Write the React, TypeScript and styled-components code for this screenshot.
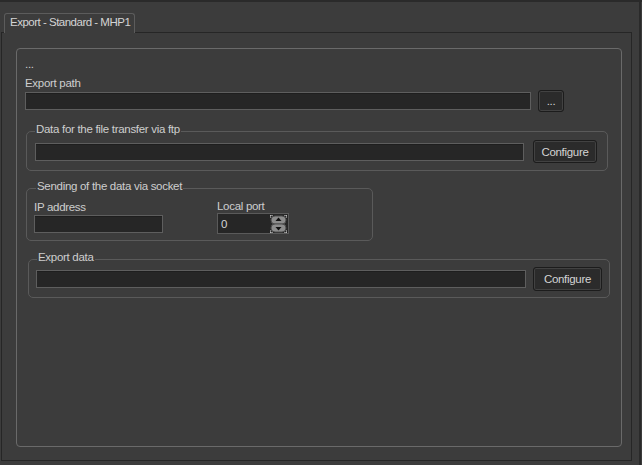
import styled, { createGlobalStyle } from "styled-components"

const Global = createGlobalStyle`
    html, body {
        margin: 0;
        padding: 0;
        background: #3c3c3c;
    }
    body {
        font-family: "Liberation Sans", Arial, sans-serif;
        font-size: 11.5px;
        letter-spacing: -0.3px;
        color: #cecece;
    }
`
const Page = styled.div`
    width: 642px;
    height: 465px;
    box-sizing: border-box;
    border-top: 2px solid #2a2a2a;
    padding: 11px 0 0 1px;
    display: flex;
    flex-direction: column;
    background: #3c3c3c;
    box-shadow: inset -1px 0 0 #3c3c3c, inset -3px 0 0 #2a2a2a;
`
const TabBar = styled.div`
    display: flex;
    padding-left: 3px;
    margin-bottom: -1px;
    position: relative;
    z-index: 1;
`
const Tab = styled.div`
    height: 20px;
    box-sizing: border-box;
    padding: 2px 4px 0 5px;
    border: 1px solid #5c5c5c;
    border-bottom: none;
    border-radius: 3px 3px 0 0;
    background: #3c3c3c;
    line-height: 13px;
    letter-spacing: -0.5px;
    color: #d4d4d4;
    white-space: nowrap;
`
const Pane = styled.div`
    width: 631px;
    height: 429px;
    box-sizing: border-box;
    border: 1px solid #262626;
    padding: 15px 9px 13px 14px;
    display: flex;
    flex-direction: column;
`
const MainGroup = styled.div`
    flex: 1;
    border: 1px solid #6a6a6a;
    border-radius: 4px;
    padding: 9px 8px 0 8px;
    display: flex;
    flex-direction: column;
`
const Caption = styled.div<{ $mt?: number }>`
    line-height: 13px;
    margin-top: ${p => p.$mt ?? 0}px;
    white-space: nowrap;
`
const Row = styled.div<{ $gap: number }>`
    display: flex;
    align-items: center;
    gap: ${p => p.$gap}px;
`
const Field = styled.div<{ $w: number; $mt?: number }>`
    width: ${p => p.$w}px;
    height: 18px;
    margin-top: ${p => p.$mt ?? 0}px;
    box-sizing: border-box;
    background: #262626;
    border: 1px solid #5e5e5e;
    box-shadow: inset 0 1px 0 #1e1e1e;
`
const Button = styled.button<{ $w: number; $h: number }>`
    width: ${p => p.$w}px;
    height: ${p => p.$h}px;
    padding: 0;
    font: inherit;
    letter-spacing: inherit;
    color: #d4d4d4;
    background: #2b2b2b;
    border: 1px solid #1c1c1c;
    border-radius: 3px;
    box-shadow: inset 0 0 0 1px #424242;
`
const Group = styled.fieldset<{ $w: number; $mt: number; $ml: number; $pad: string }>`
    width: ${p => p.$w}px;
    margin: ${p => p.$mt}px 0 0 ${p => p.$ml}px;
    box-sizing: border-box;
    min-width: 0;
    border: 1px solid #5a5a5a;
    border-radius: 5px;
    padding: ${p => p.$pad};
`
const Legend = styled.legend<{ $ml: number }>`
    padding: 0 1px 3px;
    margin-left: ${p => p.$ml}px;
    line-height: 13px;
    color: #cecece;
    white-space: nowrap;
`
const Columns = styled.div`
    display: flex;
    align-items: flex-start;
`
const Column = styled.div<{ $w?: number; $mt?: number }>`
    width: ${p => (p.$w ? `${p.$w}px` : "auto")};
    margin-top: ${p => p.$mt ?? 0}px;
    display: flex;
    flex-direction: column;
`
const SpinBox = styled.div`
    width: 72px;
    height: 21px;
    box-sizing: border-box;
    border: 1px solid #5a5a5a;
    background: #262626;
    display: flex;
    align-items: center;
    padding: 0 1px 0 3px;
`
const SpinValue = styled.span`
    flex: 1;
    color: #d4d4d4;
`

const SpinArrows = () => (
    <svg width="17" height="18" viewBox="0 0 17 18">
        <rect x="1" y="1" width="15" height="8" rx="4" fill="#8c8c8c" stroke="#4e4e4e" />
        <rect x="1" y="9" width="15" height="8" rx="4" fill="#8c8c8c" stroke="#4e4e4e" />
        <path d="M8.5 2.5 L11.5 6 H5.5 Z" fill="#111" />
        <path d="M5.5 12 H11.5 L8.5 15.5 Z" fill="#111" />
        <path d="M0 0 H3 M0 0 V3 M17 0 H14 M17 0 V3 M0 18 H3 M0 18 V15 M17 18 H14 M17 18 V15" stroke="#e8e8e8" strokeWidth="1" />
    </svg>
)

function App() {
    return (
        <>
            <Global />
            <Page>
                <TabBar>
                    <Tab>Export - Standard - MHP1</Tab>
                </TabBar>
                <Pane>
                    <MainGroup>
                        <Caption>...</Caption>
                        <Caption $mt={6}>Export path</Caption>
                        <Row $gap={7}>
                            <Field $w={506} />
                            <Button $w={26} $h={22}>...</Button>
                        </Row>

                        <Group $w={582} $mt={11} $ml={1} $pad="1px 10px 7px 8px">
                            <Legend $ml={0}>Data for the file transfer via ftp</Legend>
                            <Row $gap={9}>
                                <Field $w={489} />
                                <Button $w={64} $h={23}>Configure</Button>
                            </Row>
                        </Group>

                        <Group $w={347} $mt={9} $ml={1} $pad="5px 7px 6px 7px">
                            <Legend $ml={2}>Sending of the data via socket</Legend>
                            <Columns>
                                <Column $w={183}>
                                    <Caption>IP address</Caption>
                                    <Field $w={129} $mt={1} />
                                </Column>
                                <Column $mt={-1}>
                                    <Caption>Local port</Caption>
                                    <SpinBox>
                                        <SpinValue>0</SpinValue>
                                        <SpinArrows />
                                    </SpinBox>
                                </Column>
                            </Columns>
                        </Group>

                        <Group $w={582} $mt={10} $ml={3} $pad="0 7px 6px 7px">
                            <Legend $ml={1}>Export data</Legend>
                            <Row $gap={7}>
                                <Field $w={490} />
                                <Button $w={69} $h={24}>Configure</Button>
                            </Row>
                        </Group>
                    </MainGroup>
                </Pane>
            </Page>
        </>
    )
}

export default App
